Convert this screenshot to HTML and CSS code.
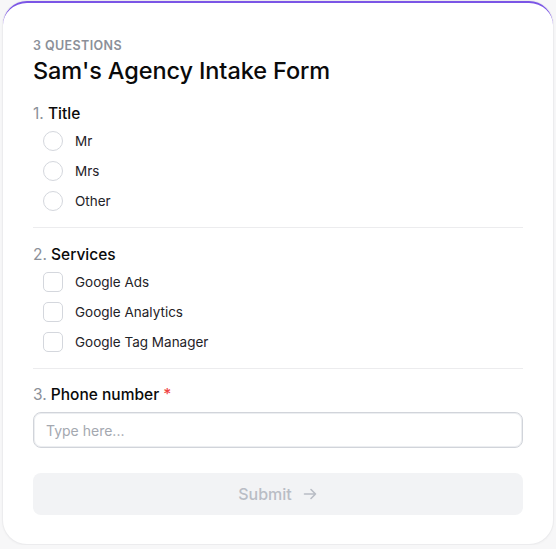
FILE: index.html
```html
<!DOCTYPE html>
<html>
<head>
<meta charset="utf-8">
<link rel="stylesheet" href="styles.css">
</head>
<body>
<div class="card">
  <div class="header">
    <div class="count">3 Questions</div>
    <h1 class="title">Sam's Agency Intake Form</h1>
  </div>
  <div class="question first">
    <div class="qlabel"><span class="num">1.</span> Title</div>
    <div class="options">
      <label class="option"><span class="radio"></span>Mr</label>
      <label class="option"><span class="radio"></span>Mrs</label>
      <label class="option"><span class="radio"></span>Other</label>
    </div>
  </div>
  <div class="question">
    <div class="qlabel"><span class="num">2.</span> Services</div>
    <div class="options">
      <label class="option"><span class="check"></span>Google Ads</label>
      <label class="option"><span class="check"></span>Google Analytics</label>
      <label class="option"><span class="check"></span>Google Tag Manager</label>
    </div>
  </div>
  <div class="question last">
    <div class="qlabel"><span class="num">3.</span> Phone number <span class="req">*</span></div>
    <input class="input" type="text" placeholder="Type here...">
  </div>
  <button class="submit">Submit
    <svg width="16" height="16" viewBox="0 0 16 16" fill="none" stroke="currentColor" stroke-width="1.6" stroke-linecap="round" stroke-linejoin="round"><path d="M2.5 8h11M9 3.5 13.5 8 9 12.5"/></svg>
  </button>
</div>
</body>
</html>
```
FILE: styles.css
```css
* { box-sizing: border-box; }
html, body { margin: 0; }
body {
  background: #f7f7f8;
  padding: 1px 3px;
  font-family: Inter, "Noto Sans", sans-serif;
  color: #111827;
}
.card {
  width: 550px;
  background: #fff;
  border-radius: 24px;
  border-top: 2px solid #7b55e6;
  box-shadow: 0 0 0 1px #ececee, 0 1px 3px rgba(0,0,0,0.06);
  padding: 35px 30px 29px;
  display: flex;
  flex-direction: column;
}
.header { margin-bottom: 2px; }
.count {
  font-size: 12.5px;
  font-weight: 600;
  letter-spacing: 0.4px;
  text-transform: uppercase;
  color: #8b9099;
  line-height: 16px;
}
.title {
  margin: 3px 0 0;
  font-size: 23.5px;
  font-weight: 500;
  line-height: 28px;
  color: #0a0a0a;
  letter-spacing: -0.1px;
}
.question {
  padding: 15px 0 11px;
  border-bottom: 1px solid #ececee;
}
.question.last { border-bottom: none; padding: 14px 0 0; }
.qlabel {
  font-size: 15.5px;
  line-height: 24px;
  font-weight: 500;
  color: #0a0a0a;
}
.num { color: #8b9099; font-weight: 400; }
.req { color: #ef4444; }
.options {
  display: flex;
  flex-direction: column;
}
.option {
  display: flex;
  align-items: center;
  height: 30px;
  padding-left: 10px;
  gap: 12px;
  font-size: 13.5px;
  color: #1f2328;
}
.radio, .check {
  width: 20px;
  height: 20px;
  border: 1px solid #d4d7dd;
  background: #fff;
  flex: none;
}
.radio { border-radius: 50%; }
.check { border-radius: 5px; }
.input {
  display: block;
  margin-top: 5px;
  width: 100%;
  height: 36px;
  border: 1px solid #d1d4da;
  border-radius: 8px;
  box-shadow: inset 0 0 0 1px #eceef1;
  padding: 0 12px;
  font-family: inherit;
  font-size: 14px;
  color: #111827;
  outline: none;
}
.input::placeholder { color: #a4a8b0; }
.submit {
  margin-top: 25px;
  height: 42px;
  flex: none;
  width: 100%;
  border: none;
  border-radius: 8px;
  background: #f2f3f5;
  color: #b9bdc5;
  font-family: inherit;
  font-size: 16px;
  font-weight: 500;
  display: flex;
  align-items: center;
  justify-content: center;
  gap: 10px;
}
```
